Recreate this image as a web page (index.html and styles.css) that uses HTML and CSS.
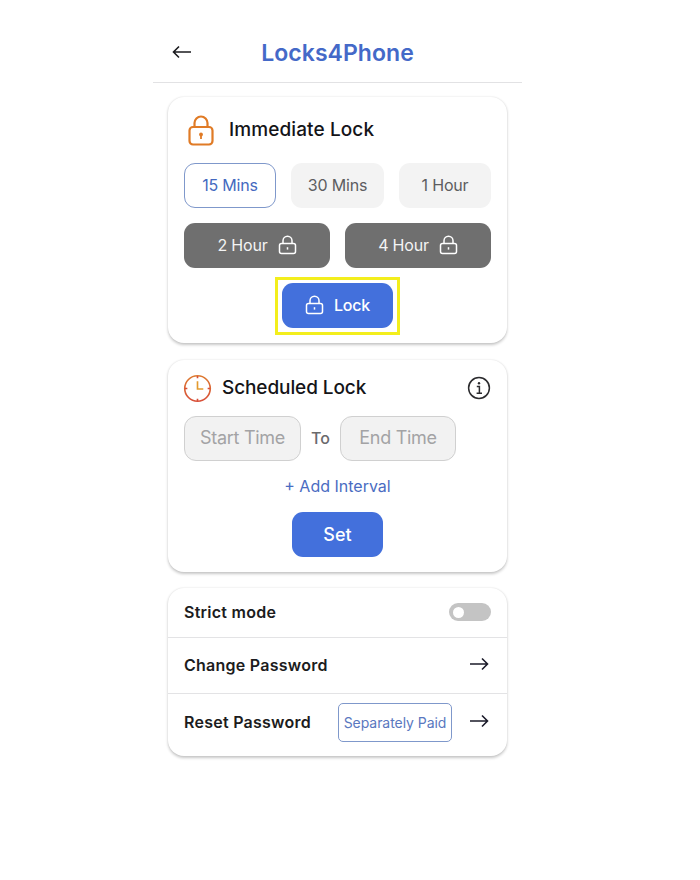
FILE: index.html
```html
<!DOCTYPE html>
<html lang="en">
<head>
<meta charset="utf-8">
<title>Locks4Phone</title>
<link rel="stylesheet" href="styles.css">
</head>
<body>
<div class="app">
  <header class="topbar">
    <svg class="back" width="20" height="14" viewBox="0 0 20 14"><path d="M19 7H1.5M7 1.5 1.5 7 7 12.5" fill="none" stroke="#1b1b1f" stroke-width="1.6"/></svg>
    <h1 class="title">Locks4Phone</h1>
    <span class="topbar-spacer"></span>
  </header>
  <main class="content">
    <section class="card card-immediate">
      <div class="card-head head-immediate">
        <svg width="28" height="32" viewBox="0 0 28 32"><path d="M7.5 13V9a6.5 6.5 0 0 1 13 0v4" fill="none" stroke="#e07b26" stroke-width="2.2"/><rect x="2.5" y="13" width="23" height="17.5" rx="3.5" fill="none" stroke="#e07b26" stroke-width="2.2"/><circle cx="14" cy="20.5" r="1.9" fill="#e07b26"/><path d="M14 21v4" stroke="#e07b26" stroke-width="1.8"/></svg>
        <h2 class="card-title">Immediate Lock</h2>
      </div>
      <div class="row-three">
        <button class="chip chip-active">15 Mins</button>
        <button class="chip">30 Mins</button>
        <button class="chip">1 Hour</button>
      </div>
      <div class="row-two">
        <button class="chip chip-locked">2 Hour
          <svg class="mini-lock" width="19" height="20" viewBox="0 0 19 20"><path d="M5 8.5V5.8a4.5 4.5 0 0 1 9 0v2.7" fill="none" stroke="#fff" stroke-width="1.5"/><rect x="1.5" y="8.5" width="16" height="10" rx="2" fill="none" stroke="#fff" stroke-width="1.5"/><path d="M9.5 12.2v2.4" stroke="#fff" stroke-width="1.5"/></svg>
        </button>
        <button class="chip chip-locked">4 Hour
          <svg class="mini-lock" width="19" height="20" viewBox="0 0 19 20"><path d="M5 8.5V5.8a4.5 4.5 0 0 1 9 0v2.7" fill="none" stroke="#fff" stroke-width="1.5"/><rect x="1.5" y="8.5" width="16" height="10" rx="2" fill="none" stroke="#fff" stroke-width="1.5"/><path d="M9.5 12.2v2.4" stroke="#fff" stroke-width="1.5"/></svg>
        </button>
      </div>
      <div class="center">
        <div class="highlight">
          <button class="primary primary-lock">
            <svg width="19" height="20" viewBox="0 0 19 20"><path d="M5 8.5V5.8a4.5 4.5 0 0 1 9 0v2.7" fill="none" stroke="#fff" stroke-width="1.5"/><rect x="1.5" y="8.5" width="16" height="10" rx="2" fill="none" stroke="#fff" stroke-width="1.5"/><path d="M9.5 12.2v2.4" stroke="#fff" stroke-width="1.5"/></svg>
            Lock
          </button>
        </div>
      </div>
    </section>

    <section class="card card-scheduled">
      <div class="card-head head-scheduled">
        <svg width="29" height="29" viewBox="0 0 30 30"><defs><linearGradient id="clk" x1="0" y1="0" x2="0" y2="1"><stop offset="0" stop-color="#dd7a30"/><stop offset="1" stop-color="#d8503a"/></linearGradient></defs><circle cx="15" cy="15" r="13.2" fill="none" stroke="url(#clk)" stroke-width="1.7"/><path d="M15 7.5V15.5H21" fill="none" stroke="#e39a2e" stroke-width="1.7"/><path d="M15 2v2.5M15 25.5V28M2 15h2.5M25.5 15H28" stroke="#d8503a" stroke-width="1.7"/></svg>
        <h2 class="card-title">Scheduled Lock</h2>
        <svg class="info" width="24" height="24" viewBox="0 0 24 24"><circle cx="12" cy="12" r="10.4" fill="none" stroke="#2b2b2e" stroke-width="1.5"/><circle cx="12" cy="7.3" r="1.2" fill="#2b2b2e"/><path d="M9.8 10.6H12.4V17M9.6 17.2h5.4" fill="none" stroke="#2b2b2e" stroke-width="1.5"/></svg>
      </div>
      <div class="time-row">
        <div class="time-field time-start">Start Time</div>
        <span class="to">To</span>
        <div class="time-field time-end">End Time</div>
      </div>
      <div class="add-interval">+ Add Interval</div>
      <div class="center">
        <button class="primary primary-set">Set</button>
      </div>
    </section>

    <section class="card card-list">
      <div class="list-row row-strict">
        <span class="row-label">Strict mode</span>
        <span class="toggle"><span class="knob"></span></span>
      </div>
      <div class="list-row row-change">
        <span class="row-label">Change Password</span>
        <svg class="arrow" width="20" height="14" viewBox="0 0 20 14"><path d="M1 7h17.5M13 1.5 18.5 7 13 12.5" fill="none" stroke="#1b1b2a" stroke-width="1.6"/></svg>
      </div>
      <div class="list-row row-reset">
        <span class="row-label">Reset Password</span>
        <span class="badge">Separately Paid</span>
        <svg class="arrow" width="20" height="14" viewBox="0 0 20 14"><path d="M1 7h17.5M13 1.5 18.5 7 13 12.5" fill="none" stroke="#1b1b2a" stroke-width="1.6"/></svg>
      </div>
    </section>
  </main>
</div>
</body>
</html>
```
FILE: styles.css
```css
* { box-sizing: border-box; }
html, body { margin: 0; padding: 0; background: #fff; }
body { font-family: Inter, "Noto Sans", sans-serif; color: #17171b; }
button { font-family: inherit; border: 0; padding: 0; }
.app { width: 369px; margin-left: 153px; }
.topbar { height: 83px; border-bottom: 1px solid #e2e2e4; display: grid; grid-template-columns: 1fr auto 1fr; align-items: center; padding: 26px 0 2px 19px; }
.title { margin: 0; padding-right: 19px; text-align: center; font-size: 23px; line-height: 28px; font-weight: 600; letter-spacing: 0.05px; color: #4469c8; }
.back { margin-top: -2px; }
.content { padding: 14px 15px 40px; display: flex; flex-direction: column; }
.card { background: #fff; border-radius: 16px; box-shadow: 0 1.5px 3px rgba(0,0,0,.22), 0 0 2px rgba(0,0,0,.06); }
.card-immediate { height: 246px; padding: 0 16px; }
.card-scheduled { height: 212px; padding: 0 16px; margin-top: 17px; }
.card-list { margin-top: 16px; }
.card-head { display: flex; align-items: center; }
.head-immediate { height: 66px; padding: 0 0 0 3px; gap: 14px; }
.head-scheduled { height: 56px; gap: 10px; padding-top: 0; margin-left: -1px; }
.card-title { margin: 0; font-size: 19px; line-height: 24px; font-weight: 500; letter-spacing: 0.1px; color: #141418; }
.head-scheduled .card-title { letter-spacing: -0.1px; }
.info { margin-left: auto; margin-right: 0; }
.row-three { display: grid; grid-template-columns: 92px 93px 92px; justify-content: space-between; }
.row-two { display: grid; grid-template-columns: 146px 146px; justify-content: space-between; margin-top: 15px; }
.chip { height: 45px; padding-bottom: 1px; border-radius: 11px; background: #f3f3f3; color: #5d5d60; font-size: 16px; display: flex; align-items: center; justify-content: center; gap: 10px; letter-spacing: -0.2px; }
.chip-active { background: #fff; border: 1.5px solid #7f98cb; color: #4469c0; }
.chip-locked { background: #6f6f6f; color: #f4f4f4; }
.center { display: flex; justify-content: center; }
.highlight { border: 3px solid #f3ee1c; padding: 3px 4px; margin-top: 9px; height: 58px; }
.primary { background: #4370dc; color: #fff; border-radius: 11px; height: 45px; display: flex; align-items: center; justify-content: center; }
.primary-lock { width: 111px; gap: 10px; padding-bottom: 1px; font-size: 16px; font-weight: 500; letter-spacing: -0.2px; }
.primary-set { width: 91px; font-size: 18px; font-weight: 500; margin-top: 16px; }
.time-row { display: flex; align-items: center; }
.time-field { height: 45px; padding-bottom: 2px; border: 1.5px solid #d0d0d0; border-radius: 12px; background: #f2f2f2; color: #a3a3a5; font-size: 18px; letter-spacing: -0.3px; display: flex; align-items: center; justify-content: center; }
.time-start { width: 117px; }
.time-end { width: 116px; }
.to { width: 39px; padding-bottom: 2px; text-align: center; font-size: 16px; font-weight: 500; color: #6a6a6c; }
.add-interval { margin-top: 15px; text-align: center; font-size: 16px; line-height: 20px; letter-spacing: 0; color: #4a6cc2; }
.list-row { display: flex; align-items: center; padding: 0 16px; }
.row-strict { height: 50px; border-bottom: 1.5px solid #e3e3e5; justify-content: space-between; padding-bottom: 1px; }
.row-change { height: 56px; border-bottom: 1.5px solid #e3e3e5; justify-content: space-between; padding-bottom: 1px; }
.row-reset { height: 62px; padding-bottom: 6px; }
.row-label { font-size: 16px; font-weight: 600; letter-spacing: 0.25px; color: #1c1c20; }
.toggle { width: 42px; height: 18px; border-radius: 9px; background: #c4c4c4; display: flex; align-items: center; padding-left: 4px; }
.knob { width: 11px; height: 11px; border-radius: 50%; background: #fff; }
.arrow { margin-right: 2px; margin-top: -3px; }
.badge { width: 114px; height: 39px; margin-left: auto; margin-right: 17px; border: 1.5px solid #7f98cb; border-radius: 5px; color: #5a78c0; font-size: 14px; letter-spacing: -0.05px; display: flex; align-items: center; justify-content: center; white-space: nowrap; }
```
